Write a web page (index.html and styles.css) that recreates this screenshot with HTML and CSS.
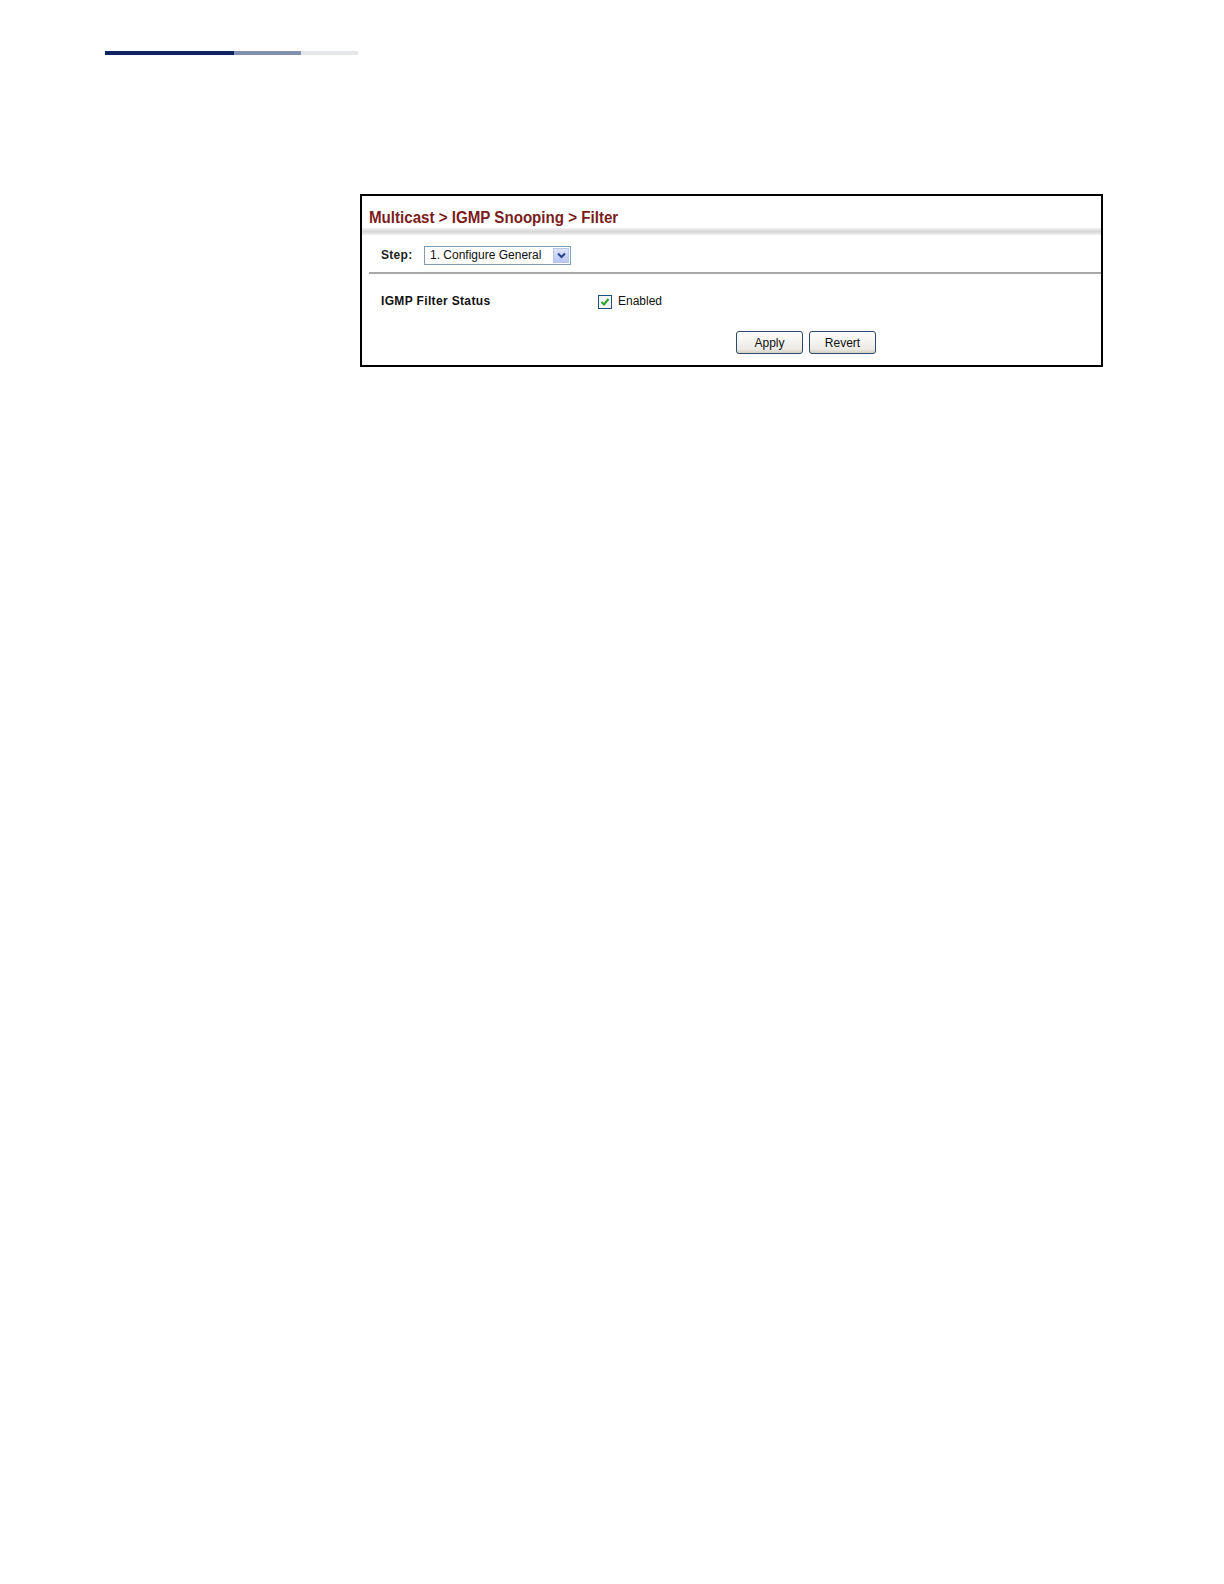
FILE: index.html
```html
<!DOCTYPE html>
<html>
<head>
<meta charset="utf-8">
<link rel="stylesheet" href="styles.css">
</head>
<body>
<div class="topbar"><span class="seg1"></span><span class="seg2"></span><span class="seg3"></span></div>
<div class="panel">
  <div class="title"><span class="titletext">Multicast &gt; IGMP Snooping &gt; Filter</span></div>
  <div class="band"></div>
  <div class="steprow">
    <span class="steplabel">Step:</span>
    <div class="select"><span class="selval">1. Configure General</span><span class="selbtn"><svg width="11" height="9" viewBox="0 0 11 9"><path d="M2 2.5 L5.5 6 L9 2.5" fill="none" stroke="#2a3f8a" stroke-width="2"/></svg></span></div>
  </div>
  <div class="rule"></div>
  <div class="fieldrow">
    <span class="fieldlabel">IGMP Filter Status</span>
    <span class="check"><svg width="12" height="12" viewBox="0 0 12 12"><path d="M2.5 6 L5 8.5 L9.5 3" fill="none" stroke="#2aa52a" stroke-width="2"/></svg></span>
    <span class="checklabel">Enabled</span>
  </div>
  <div class="buttons">
    <span class="btn">Apply</span>
    <span class="btn">Revert</span>
  </div>
</div>
</body>
</html>
```
FILE: styles.css
```css
html, body { margin: 0; padding: 0; background: #fff; }
body { font-family: "Liberation Sans", Arial, sans-serif; }
.topbar { display: flex; margin: 51px 0 0 105px; height: 4px; }
.seg1 { width: 129px; background: #0c2461; }
.seg2 { width: 67px; background: #8391b1; }
.seg3 { width: 57px; background: #e6e7ea; }
.panel {
  margin: 139px 0 0 360px;
  width: 739px;
  height: 169px;
  border: 2px solid #000;
  box-sizing: content-box;
}
.title {
  padding: 13px 0 0 7px;
  height: 19px;
  line-height: 18px;
}
.titletext {
  display: inline-block;
  font-family: "Liberation Sans", sans-serif;
  font-size: 16px;
  font-weight: bold;
  color: #7b1c1c;
  transform: scaleX(0.945);
  transform-origin: left center;
  white-space: nowrap;
}
.band {
  height: 7px;
  background: linear-gradient(#f4f4f4, #d6d6d6 50%, #f2f2f2);
}
.steprow { display: flex; align-items: center; height: 26px; padding: 7px 0 0 19px; }
.steplabel { font-size: 12px; font-weight: bold; color: #222; width: 43px; letter-spacing: 0.3px; }
.select {
  width: 147px; height: 19px; border: 1px solid #7f9db9; display: flex; align-items: center; box-sizing: border-box;
  justify-content: space-between;
}
.selval { font-size: 12px; color: #111; padding-left: 5px; }
.selbtn {
  width: 16px; height: 15px; margin-right: 1px; background: linear-gradient(#dce5fb, #b7c7f1);
  border: 1px solid #b7c6ea; box-sizing: border-box; display: flex; align-items: center; justify-content: center;
}
.rule { margin: 4px 0 0 7px; height: 2px; background: #a8a8a8; }
.fieldrow { display: flex; align-items: center; padding: 19px 0 0 19px; height: 16px; }
.fieldlabel { font-size: 12px; font-weight: bold; color: #111; width: 217px; letter-spacing: 0.35px; }
.check {
  width: 14px; height: 14px; border: 1px solid #1c5180; box-sizing: border-box; display: flex; align-items: center;
  justify-content: center; background: #f4f4f0; margin-top: 2px;
}
.checklabel { font-size: 12px; color: #111; margin-left: 6px; }
.buttons { display: flex; gap: 6px; padding: 22px 0 0 374px; }
.btn {
  width: 67px; height: 23px; box-sizing: border-box; border: 1px solid #2e4a6b; border-radius: 3px;
  background: linear-gradient(#fdfdfb, #ecebe6 80%, #d6d0c5);
  font-size: 12px; color: #111; display: flex; align-items: center; justify-content: center;
}
```
